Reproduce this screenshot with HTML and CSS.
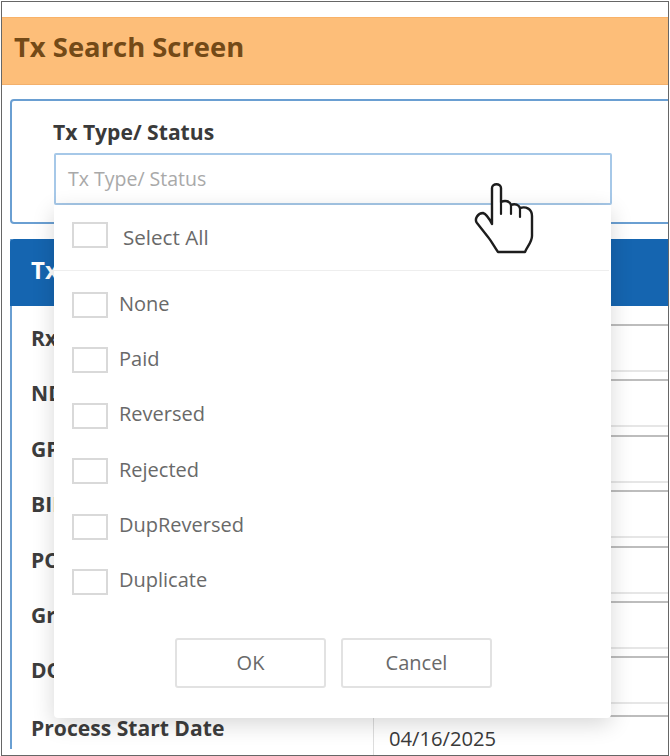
FILE: index.html
```html
<!DOCTYPE html>
<html lang="en">
<head>
    <meta charset="UTF-8">
    <meta name="viewport" content="width=device-width, initial-scale=1.0">
    <title>Tx Search Screen</title>
    <link rel="stylesheet" href="styles.css">
</head>
<body>

<div class="frame">
    <h1 class="page-title">Tx Search Screen</h1>

    <div class="filter-card">
        <label class="field-label">Tx Type/ Status</label>
        <div class="type-field">
            <div class="type-input">Tx Type/ Status</div>

            <!-- dropdown open over the panel below -->
            <div class="dropdown">
                <div class="select-all">
                    <span class="check"></span>
                    <span class="select-all-text">Select All</span>
                </div>
                <div class="options">
                    <div class="option"><span class="check"></span><span class="option-text">None</span></div>
                    <div class="option"><span class="check"></span><span class="option-text">Paid</span></div>
                    <div class="option"><span class="check"></span><span class="option-text">Reversed</span></div>
                    <div class="option"><span class="check"></span><span class="option-text">Rejected</span></div>
                    <div class="option"><span class="check"></span><span class="option-text">DupReversed</span></div>
                    <div class="option"><span class="check"></span><span class="option-text">Duplicate</span></div>
                </div>
                <div class="actions">
                    <button type="button" class="btn">OK</button>
                    <button type="button" class="btn">Cancel</button>
                </div>
            </div>
        </div>
    </div>

    <div class="panel">
        <div class="panel-head">Tx</div>
        <div class="row"><div class="row-label">Rx</div><div class="row-value"><div class="value-box"></div></div></div>
        <div class="row"><div class="row-label">NDC</div><div class="row-value"><div class="value-box"></div></div></div>
        <div class="row"><div class="row-label">GPI</div><div class="row-value"><div class="value-box"></div></div></div>
        <div class="row"><div class="row-label">BIN</div><div class="row-value"><div class="value-box"></div></div></div>
        <div class="row"><div class="row-label">PCN</div><div class="row-value"><div class="value-box"></div></div></div>
        <div class="row"><div class="row-label">Gr</div><div class="row-value"><div class="value-box"></div></div></div>
        <div class="row"><div class="row-label">DOS</div><div class="row-value"><div class="value-box"></div></div></div>
        <div class="row row-last"><div class="row-label">Process Start Date</div><div class="row-value"><div class="value-box">04/16/2025</div></div></div>
    </div>

    <!-- mouse pointer in the screenshot -->
    <svg class="hand" viewBox="0 0 90 95" width="90" height="95">
        <path d="M31 54V18C31 13 40 13 40 18V32C44 30 49 31 50 35C54 33 58 35 59 38C65 36 71 39 71 46V66C71 72 66 77 64 82H37C34 78 31 72 27 67L16 53C13 49 17 43 22 43C25 44 28 48 31 54Z" fill="#fff" stroke="#1d1d1d" stroke-width="2.4" stroke-linejoin="round"/>
        <path d="M40 32V44M50 35V44M59 38V47" fill="none" stroke="#1d1d1d" stroke-width="2.2" stroke-linecap="round"/>
    </svg>
</div>

</body>
</html>
```

FILE: styles.css
```css
* {
    box-sizing: border-box;
}
body {
    margin: 0;
    background-color: #fff;
    font-family: "Open Sans", Arial, sans-serif;
    color: #333;
}
.frame {
    position: relative;
    width: 668px;
    height: 755px;
    margin: 1px 0 0 1px;
    padding-top: 15px;
    border: 1px solid #666;
    overflow: hidden;
}
.page-title {
    margin: 0;
    height: 68px;
    padding-left: 12px;
    background-color: #fdbe79;
    border-top: 1px solid #f9b268;
    border-bottom: 1px solid #f3b06c;
    font-size: 27.4px;
    line-height: 58px;
    font-weight: 700;
    color: #744a17;
}
.filter-card {
    width: 680px;
    height: 125px;
    margin: 14px 0 0 8px;
    padding: 19px 0 0 41px;
    border: 2px solid #6a9fd2;
    border-radius: 4px;
}
.field-label {
    display: block;
    font-size: 21.1px;
    line-height: 24px;
    font-weight: 700;
    color: #3a3a3a;
}
.type-field {
    position: relative;
    width: 558px;
    margin: 9px 0 0 1px;
}
.type-input {
    height: 52px;
    padding-left: 12px;
    border: 2px solid #a6c8e8;
    border-radius: 2px;
    background-color: #fff;
    font-size: 19.5px;
    line-height: 47px;
    color: #a9a9a9;
}
.dropdown {
    position: absolute;
    top: 52px;
    left: 0;
    z-index: 2;
    width: 557px;
    height: 513px;
    padding-top: 17px;
    background-color: #fff;
    border-radius: 0 0 4px 4px;
    box-shadow: 0 6px 22px rgba(0, 0, 0, 0.16);
    font-size: 20px;
    color: #696969;
}
.check {
    flex: none;
    width: 36px;
    height: 26px;
    border: 2px solid #d9d9d9;
    background-color: #fff;
}
.select-all {
    display: flex;
    align-items: center;
    gap: 15px;
    height: 49px;
    padding: 0 0 23px 18px;
    border-bottom: 1px solid #eee;
    margin-right: 2px;
}
.select-all-text {
    margin-top: 4px;
    font-size: 20.6px;
}
.options {
    display: flex;
    flex-direction: column;
    gap: 29.4px;
    padding: 21px 0 0 18px;
}
.option {
    display: flex;
    align-items: center;
    gap: 11px;
    height: 26px;
    line-height: 24px;
}
.option-text {
    margin-bottom: 3px;
}
.actions {
    display: flex;
    justify-content: center;
    gap: 15px;
    margin-top: 43px;
    padding-left: 2px;
}
.btn {
    width: 151px;
    height: 50px;
    padding: 0;
    border: 2px solid #e2e2e2;
    border-radius: 3px;
    background-color: #fff;
    font-family: inherit;
    font-size: 20px;
    color: #696969;
}
.panel {
    width: 680px;
    margin: 15px 0 0 8px;
    border-left: 2px solid #6a9fd2;
}
.panel-head {
    height: 67px;
    margin-left: -2px;
    padding-left: 21px;
    background-color: #1565b0;
    border-radius: 4px 0 0 0;
    font-size: 24px;
    line-height: 62px;
    font-weight: 700;
    color: #fff;
}
.row {
    display: flex;
    height: 55.4px;
}
.row-label {
    width: 361px;
    padding: 18px 0 0 19px;
    font-size: 21.1px;
    line-height: 28px;
    font-weight: 700;
    color: #3d3d3d;
}
.row-value {
    flex: 1;
    padding-top: 18px;
}
.value-box {
    height: 48px;
    padding: 8px 0 0 15px;
    border-top: 2px solid #bdbdbd;
    border-bottom: 2px solid #e6e6e6;
    border-left: 1px solid #ddd;
    font-size: 20.2px;
    line-height: 26px;
    color: #3a3a3a;
}
.row-last .row-label {
    padding-top: 20px;
}
.row-last .row-value {
    padding-top: 21px;
}
.hand {
    position: absolute;
    top: 168px;
    left: 459px;
    z-index: 3;
}
```
